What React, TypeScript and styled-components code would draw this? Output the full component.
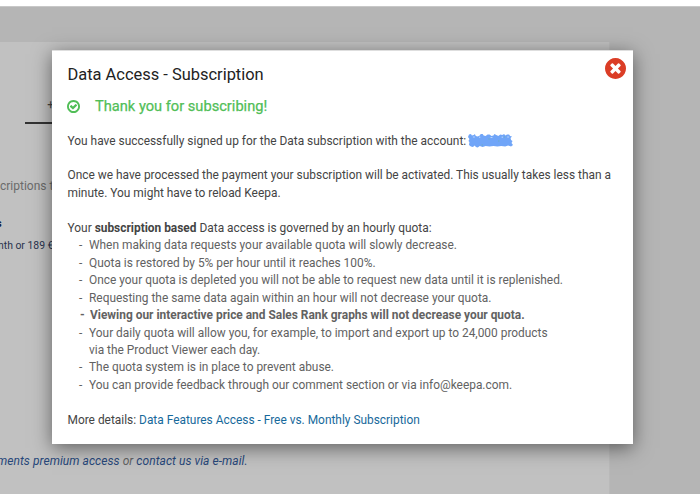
import React from "react";
import styled, { createGlobalStyle } from "styled-components";

const GlobalStyle = createGlobalStyle`
  * { box-sizing: border-box; }
  body {
    margin: 0;
    background: #fff;
    font-family: Roboto, "Liberation Sans", sans-serif;
    overflow: hidden;
  }
`;

const Screen = styled.div`
  position: relative;
  width: 700px;
  height: 500px;
  overflow: hidden;
  padding: 6px 0;
  background: #fff;
`;

const Backdrop = styled.div`
  height: 488px;
  padding-top: 35px;
  background: #b5b5b5;
  border-top: 1px solid #c8c8c8;
`;

const Page = styled.main`
  display: flex;
  flex-direction: column;
  align-items: flex-start;
  justify-content: space-between;
  width: 610px;
  height: 452px;
  padding: 55px 0 25px;
  background: #c1c1c1;
  border-right: 1px solid #b9b9b9;
  white-space: nowrap;
`;

const Tab = styled.div`
  display: flex;
  justify-content: center;
  width: 64px;
  height: 27px;
  margin: 0 0 54px 25px;
  border-bottom: 2px solid #333;
  padding-right: 6px;
  font-size: 12px;
  line-height: 16px;
  color: #444;
`;

const Plans = styled.div`
  display: flex;
  flex-direction: column;
  line-height: 16px;
`;

const PlansIntro = styled.p`
  margin: 0 0 22px;
  font-size: 12px;
  color: #6b6b6b;
`;

const PlanName = styled.p`
  margin: 0 0 6px;
  font-size: 11px;
  font-weight: 700;
  text-indent: -4px;
  color: #17223f;
`;

const PlanPrice = styled.p`
  margin: 0;
  font-size: 10.4px;
  text-indent: -2px;
  color: #28324c;
`;

const Footnote = styled.p`
  margin: 0;
  text-indent: -3px;
  font-size: 12px;
  line-height: 16px;
  font-style: italic;
  letter-spacing: 0.06px;
  color: #626262;
`;

const FootLink = styled.a`
  color: #27477a;
`;

const Overlay = styled.div`
  position: absolute;
  inset: 0;
  display: flex;
  align-items: flex-start;
  padding: 50px 67px 0 52px;
`;

const Dialog = styled.section`
  position: relative;
  flex: 1;
  height: 394px;
  padding: 14px 15px 0 15.5px;
  background: #fff;
  border-top: 1px solid #dedede;
  box-shadow: 0 4px 18px rgba(0, 0, 0, 0.5);
  white-space: nowrap;
`;

const Title = styled.h1`
  margin: 0;
  font-size: 16.45px;
  line-height: 20px;
  font-weight: 400;
  color: #222;
`;

const Success = styled.div`
  display: flex;
  align-items: center;
  gap: 15px;
  height: 20px;
  margin-top: 11px;
  margin-left: -0.5px;
  font-size: 14.65px;
  color: #51be57;
  -webkit-text-stroke: 0.25px #51be57;
`;

const Body = styled.div`
  display: flex;
  flex-direction: column;
  gap: 17.45px;
  margin-top: 16.6px;
  font-size: 11.91px;
  line-height: 17.45px;
  color: #444;
`;

const Paragraph = styled.p`
  margin: 0;
`;

const AccountLine = styled(Paragraph)`
  display: flex;
  align-items: center;
  gap: 2px;
  height: 17.45px;
`;

const Rules = styled.ul`
  display: flex;
  flex-direction: column;
  margin: 0;
  padding: 0 0 0 11.5px;
  list-style: none;
  color: #626262;
`;

const Rule = styled.li<{ $bold?: boolean }>`
  display: flex;
  padding-left: ${(p) => (p.$bold ? 1 : 0)}px;
  font-weight: ${(p) => (p.$bold ? 700 : 400)};

  &::before {
    content: "-";
    width: 10px;
  }
`;

const Link = styled.a`
  color: #17699b;
`;

const CloseButton = styled.button`
  position: absolute;
  top: 7px;
  right: 7px;
  display: flex;
  padding: 0;
  border: 0;
  background: none;
  color: #db3d26;
`;

const Redaction = styled.svg`
  width: 45px;
  height: 15px;
  margin-bottom: 2px;
`;

const CheckIcon = () => (
  <svg width="13" height="13" viewBox="128 128 1536 1536" fill="currentColor">
    <path d="M1299 813l-422 422q-19 19-45 19t-45-19l-294-294q-19-19-19-45t19-45l102-102q19-19 45-19t45 19l147 147 275-275q19-19 45-19t45 19l102 102q19 19 19 45t-19 45zm141 83q0-148-73-273t-198-198-273-73-273 73-198 198-73 273 73 273 198 198 273 73 273-73 198-198 73-273zm224 0q0 209-103 385.5t-279.5 279.5-385.5 103-385.5-103-279.5-279.5-103-385.5 103-385.5 279.5-279.5 385.5-103 385.5 103 279.5 279.5 103 385.5z" />
  </svg>
);

const CloseIcon = () => (
  <svg width="21" height="21" viewBox="128 128 1536 1536" fill="currentColor">
    <path d="M1277 1122q0-26-19-45l-181-181 181-181q19-19 19-45 0-27-19-46l-90-90q-19-19-46-19-26 0-45 19l-181 181-181-181q-19-19-45-19-27 0-46 19l-90 90q-19 19-19 46 0 26 19 45l181 181-181 181q-19 19-19 45 0 27 19 46l90 90q19 19 46 19 26 0 45-19l181-181 181 181q19 19 45 19 27 0 46-19l90-90q19-19 19-46zm387-226q0 209-103 385.5t-279.5 279.5-385.5 103-385.5-103-279.5-279.5-103-385.5 103-385.5 279.5-279.5 385.5-103 385.5 103 279.5 279.5 103 385.5z" />
  </svg>
);

const Scribble = () => (
  <Redaction viewBox="0 0 46 15" preserveAspectRatio="none">
    <path
      fill="#70a5f8"
      d="M1 1.500 3 1 4 2.500 6 2 7 1 8 3 10 3.500 12 2.500 13 1 15 1 16 2.500 18 3 20 1.500 22 1.500 24 3 26 2.500 27 1 29 2 31 3 33 1.500 35 2 37 1 38 2.500 40 1.500 42 1.500 43 3 45 3.500 43.500 5 44 7 45.500 8 44.500 10 46 12 44 13.500 41 12.500 38 13.500 34 13 30 13.500 26 13 22 13.500 18 13 15 14 12 13 10 14.500 8 14 7 12.500 5 14 3 13.500 1 12 1.500 9 0.500 8 1.500 6 0 4Z"
    />
    <path d="M5 4h2M12 3.500v1.500M23 4.500h2M35 3.500v1.500M40 4h2" stroke="#b9d2fc" strokeWidth="1" fill="none" />
    <path d="M14 12h1M21 6h1M37 4h1M31 8h1" stroke="#68b98b" strokeWidth="0.7" fill="none" />
  </Redaction>
);

export default function App() {
  return (
    <Screen>
      <GlobalStyle />
      <Backdrop>
        <Page>
          <div>
            <Tab>+$</Tab>
            <Plans>
              <PlansIntro>criptions to</PlansIntro>
              <PlanName>s</PlanName>
              <PlanPrice>nth or 189 €</PlanPrice>
            </Plans>
          </div>
          <Footnote>
            <FootLink>ments premium access</FootLink> or <FootLink>contact us via e-mail.</FootLink>
          </Footnote>
        </Page>
      </Backdrop>
      <Overlay>
        <Dialog>
          <Title>Data Access - Subscription</Title>
          <Success>
            <CheckIcon />
            Thank you for subscribing!
          </Success>
          <Body>
            <AccountLine>
              You have successfully signed up for the Data subscription with the account:
              <Scribble />
            </AccountLine>
            <Paragraph>
              Once we have processed the payment your subscription will be activated. This usually takes less than a
              <br />
              minute. You might have to reload Keepa.
            </Paragraph>
            <div>
              <Paragraph>
                Your <b>subscription based</b> Data access is governed by an hourly quota:
              </Paragraph>
              <Rules>
                <Rule>When making data requests your available quota will slowly decrease.</Rule>
                <Rule>Quota is restored by 5% per hour until it reaches 100%.</Rule>
                <Rule>Once your quota is depleted you will not be able to request new data until it is replenished.</Rule>
                <Rule>Requesting the same data again within an hour will not decrease your quota.</Rule>
                <Rule $bold>Viewing our interactive price and Sales Rank graphs will not decrease your quota.</Rule>
                <Rule>
                  <span>
                    Your daily quota will allow you, for example, to import and export up to 24,000 products
                    <br />
                    via the Product Viewer each day.
                  </span>
                </Rule>
                <Rule>The quota system is in place to prevent abuse.</Rule>
                <Rule>You can provide feedback through our comment section or via info@keepa.com.</Rule>
              </Rules>
            </div>
            <Paragraph>
              More details: <Link>Data Features Access - Free vs. Monthly Subscription</Link>
            </Paragraph>
          </Body>
          <CloseButton aria-label="Close">
            <CloseIcon />
          </CloseButton>
        </Dialog>
      </Overlay>
    </Screen>
  );
}
